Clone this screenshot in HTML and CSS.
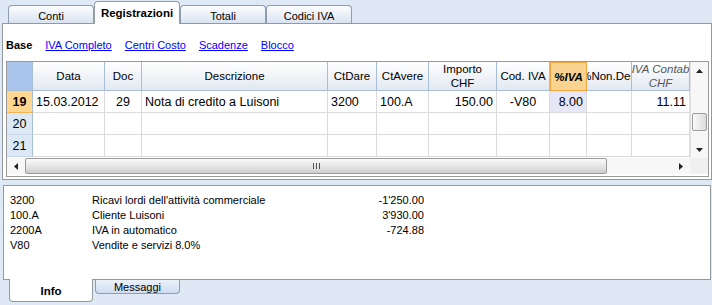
FILE: index.html
```html
<!DOCTYPE html>
<html lang="it">
  <head>
    <meta charset="UTF-8" />
    <title>Registrazioni</title>
    <link rel="stylesheet" href="styles.css">
  </head>
  <body>
    <div class="tabs-top">
      <div class="tab">Conti</div>
      <div class="tab tab-active">Registrazioni</div>
      <div class="tab">Totali</div>
      <div class="tab">Codici IVA</div>
    </div>

    <div class="main">
      <div class="views">
        <b>Base</b>
        <a href="#">IVA Completo</a>
        <a href="#">Centri Costo</a>
        <a href="#">Scadenze</a>
        <a href="#">Blocco</a>
      </div>

      <div class="grid">
        <div class="table">
          <div class="row row-head">
            <div class="cell hcell corner"></div>
            <div class="cell hcell"><span>Data</span></div>
            <div class="cell hcell"><span>Doc</span></div>
            <div class="cell hcell"><span>Descrizione</span></div>
            <div class="cell hcell"><span>CtDare</span></div>
            <div class="cell hcell"><span>CtAvere</span></div>
            <div class="cell hcell"><span>Importo<br>CHF</span></div>
            <div class="cell hcell"><span>Cod. IVA</span></div>
            <div class="cell hcell hcell-sel"><span>%IVA</span></div>
            <div class="cell hcell"><span>%Non.Ded</span></div>
            <div class="cell hcell hcell-calc"><span>IVA Contab<br>CHF</span></div>
          </div>
          <div class="row">
            <div class="cell num num-sel">19</div>
            <div class="cell">15.03.2012</div>
            <div class="cell center">29</div>
            <div class="cell">Nota di credito a Luisoni</div>
            <div class="cell">3200</div>
            <div class="cell">100.A</div>
            <div class="cell right">150.00</div>
            <div class="cell center">-V80</div>
            <div class="cell right cell-sel">8.00</div>
            <div class="cell"></div>
            <div class="cell right">11.11</div>
          </div>
          <div class="row">
            <div class="cell num">20</div>
            <div class="cell"></div>
            <div class="cell"></div>
            <div class="cell"></div>
            <div class="cell"></div>
            <div class="cell"></div>
            <div class="cell"></div>
            <div class="cell"></div>
            <div class="cell"></div>
            <div class="cell"></div>
            <div class="cell"></div>
          </div>
          <div class="row">
            <div class="cell num">21</div>
            <div class="cell"></div>
            <div class="cell"></div>
            <div class="cell"></div>
            <div class="cell"></div>
            <div class="cell"></div>
            <div class="cell"></div>
            <div class="cell"></div>
            <div class="cell"></div>
            <div class="cell"></div>
            <div class="cell"></div>
          </div>
        </div>

        <div class="vscroll">
          <div class="arrow">
            <svg width="7" height="4" viewBox="0 0 7 4"><polygon points="3.5,0 7,4 0,4" fill="#222" /></svg>
          </div>
          <div class="vtrack"><div class="vthumb"></div></div>
          <div class="arrow">
            <svg width="7" height="4" viewBox="0 0 7 4"><polygon points="0,0 7,0 3.5,4" fill="#222" /></svg>
          </div>
        </div>

        <div class="hscroll">
          <div class="arrow">
            <svg width="4" height="7" viewBox="0 0 4 7"><polygon points="4,0 4,7 0,3.5" fill="#222" /></svg>
          </div>
          <div class="hthumb"><span class="grip"></span></div>
          <div class="htrack"></div>
          <div class="arrow">
            <svg width="4" height="7" viewBox="0 0 4 7"><polygon points="0,0 4,3.5 0,7" fill="#222" /></svg>
          </div>
        </div>

        <div class="scroll-corner"></div>
      </div>
    </div>

    <div class="info">
      <div class="info-row"><span>3200</span><span>Ricavi lordi dell'attività commerciale</span><span class="amount">-1'250.00</span></div>
      <div class="info-row"><span>100.A</span><span>Cliente Luisoni</span><span class="amount">3'930.00</span></div>
      <div class="info-row"><span>2200A</span><span>IVA in automatico</span><span class="amount">-724.88</span></div>
      <div class="info-row"><span>V80</span><span>Vendite e servizi 8.0%</span><span class="amount"></span></div>
    </div>

    <div class="tabs-bottom">
      <div class="btab btab-active">Info</div>
      <div class="btab">Messaggi</div>
    </div>
  </body>
</html>
```

FILE: styles.css
```css
* {
  box-sizing: border-box;
}

body {
  margin: 0;
  width: 712px;
  height: 305px;
  overflow: hidden;
  background-color: #dfe8f5;
  font-family: "Liberation Sans", Arial, sans-serif;
  font-size: 11px;
  color: #000;
}

/* top tabs */

.tabs-top {
  display: flex;
  align-items: flex-end;
  height: 23px;
  padding-left: 8px;
}

.tab {
  width: 86px;
  height: 18px;
  border: 1px solid #8e9db3;
  border-bottom: none;
  border-radius: 4px 4px 0 0;
  background: linear-gradient(#fdfeff, #d8e3f2);
  text-align: center;
  padding-top: 3px;
  line-height: 14px;
}

.tab-active {
  position: relative;
  z-index: 1;
  height: 23px;
  margin-bottom: -1px;
  background: #fff;
  border-color: #919b9c;
  font-weight: bold;
  font-size: 11.5px;
  padding-top: 4px;
}

/* main panel */

.main {
  margin-left: 2px;
  width: 710px;
  height: 157px;
  border: 1px solid #919b9c;
  background: #fff;
}

.views {
  display: flex;
  gap: 13px;
  height: 37px;
  padding: 14px 0 8px 3px;
  line-height: 15px;
}

.views a {
  color: #0000ff;
  text-decoration: underline;
}

.grid {
  display: grid;
  grid-template-columns: 683px 18px;
  grid-template-rows: 96px 16px;
  margin-left: 3px;
  width: 703px;
  height: 116px;
  border: 1px solid #9a9a9a;
}

.table {
  overflow: hidden;
}

.row {
  display: grid;
  grid-template-columns: 26px 72px 37px 186px 49px 52px 68px 53px 37px 45px 58px;
  height: 22px;
}

.cell {
  display: flex;
  align-items: center;
  padding: 0 3px;
  overflow: hidden;
  white-space: nowrap;
  border-right: 1px solid #dadada;
  border-bottom: 1px solid #dadada;
  font-size: 12.5px;
}

.center {
  justify-content: center;
}

.right {
  justify-content: flex-end;
}

.cell-sel {
  background: #e6e7f7;
}

.row-head {
  height: 29px;
}

.hcell {
  justify-content: center;
  text-align: center;
  font-size: 11.5px;
  line-height: 14px;
  background: linear-gradient(#ffffff, #e2e8f1);
  border-color: #a8bed7;
}

.hcell span {
  flex-shrink: 0;
}

.corner {
  background: #a9c5eb;
}

.hcell-sel {
  background: #f8d490;
  border: 1px solid #f4a43e;
  font-weight: bold;
  font-style: italic;
}

.hcell-calc {
  font-style: italic;
  color: #555;
}

.num {
  justify-content: center;
  background: #dde8f5;
  border-right-color: #a8bed7;
  border-bottom-color: #c8d7ea;
}

.num-sel {
  background: #fdd78f;
  border-bottom-color: #f4b451;
  font-weight: bold;
}

/* scrollbars */

.vscroll {
  grid-column: 2;
  grid-row: 1;
  display: flex;
  flex-direction: column;
  background: #f7f7f7;
  border-left: 1px solid #e2e2e2;
}

.vscroll .arrow {
  display: flex;
  align-items: center;
  justify-content: center;
  height: 17px;
}

.vtrack {
  flex: 1;
  padding: 34px 1px 0 1px;
}

.vthumb {
  height: 18px;
  border: 1px solid #9c9c9c;
  border-radius: 2px;
  background: linear-gradient(90deg, #fafafa, #dcdcdc);
}

.hscroll {
  grid-column: 1;
  grid-row: 2;
  display: flex;
  background: #f7f7f7;
}

.hscroll .arrow {
  display: flex;
  align-items: center;
  justify-content: center;
  width: 18px;
}

.hthumb {
  display: flex;
  align-items: center;
  justify-content: center;
  width: 582px;
  border: 1px solid #9c9c9c;
  border-radius: 2px;
  background: linear-gradient(#fafafa, #e4e4e4 55%, #cdcdcd);
}

.grip {
  width: 7px;
  height: 6px;
  background: repeating-linear-gradient(90deg, #555 0 1px, transparent 1px 3px);
}

.htrack {
  flex: 1;
}

.scroll-corner {
  grid-column: 2;
  grid-row: 2;
  background: #f0f0f0;
}

/* info panel */

.info {
  margin: 5px 0 0 3px;
  width: 708px;
  height: 95px;
  border: 1px solid #919b9c;
  background: #fff;
  padding: 7px 0 0 6px;
}

.info-row {
  display: grid;
  grid-template-columns: 82px 250px 82px;
  line-height: 15px;
}

.amount {
  text-align: right;
}

/* bottom tabs */

.tabs-bottom {
  display: flex;
  align-items: flex-start;
  gap: 2px;
  padding-left: 9px;
}

.btab {
  width: 85px;
  height: 14px;
  border: 1px solid #8e9db3;
  border-top: none;
  border-radius: 0 0 4px 4px;
  background: linear-gradient(#eaf1fa, #d0def1);
  text-align: center;
  padding-top: 1px;
  line-height: 12px;
}

.btab-active {
  position: relative;
  width: 84px;
  height: 23px;
  margin-top: -1px;
  background: #fff;
  border-color: #919b9c;
  font-weight: bold;
  font-size: 11.5px;
  padding-top: 5px;
  line-height: 14px;
}
```
